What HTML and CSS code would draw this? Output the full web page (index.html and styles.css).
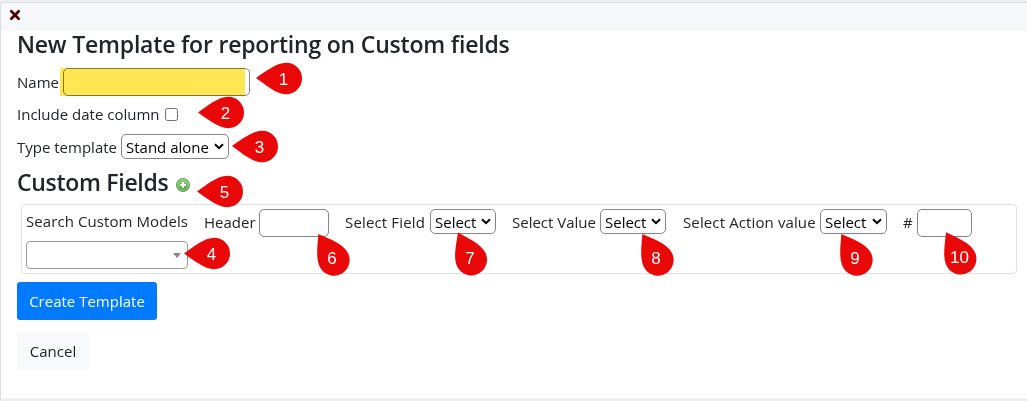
FILE: index.html
```html
<!DOCTYPE html>
<html lang="en">
  <head>
    <meta charset="UTF-8">
    <meta name="viewport" content="width=device-width, initial-scale=1.0">
    <title>New Template</title>
    <link rel="stylesheet" href="styles.css">
  </head>
  <body>
    <main class="card">
      <header class="card-header">
        <svg class="close" viewBox="0 0 12 12"><path d="M2.3 2.3L9.7 9.7M9.7 2.3L2.3 9.7"/></svg>
      </header>
      <section class="card-body">
        <h1 class="title">New Template for reporting on Custom fields</h1>
        <div class="row row-name">
          <label class="label-name">Name</label>
          <div class="name-wrap">
            <input class="input input-name" type="text">
            <span class="highlight"></span>
          </div>
        </div>
        <div class="row row-date">
          <label class="label-date">Include date column</label>
          <span class="check"></span>
        </div>
        <div class="row row-type">
          <label class="label-type">Type template</label>
          <div class="select select-type"><span>Stand alone</span><svg viewBox="0 0 10 7"><path d="M1 1.2L5 5.2L9 1.2"/></svg></div>
        </div>
        <div class="row row-fields">
          <h2 class="title title-fields">Custom Fields</h2>
          <svg class="add" viewBox="0 0 14 14">
            <defs>
              <linearGradient id="green" x1="0" y1="0" x2="0" y2="1">
                <stop offset="0" stop-color="#8fce7c"/>
                <stop offset="1" stop-color="#43a02c"/>
              </linearGradient>
            </defs>
            <circle cx="7" cy="7" r="6.4" fill="url(#green)" stroke="#4a963a"/>
            <circle cx="7" cy="7" r="5.3" fill="none" stroke="#b5dfa8" stroke-width=".8"/>
            <path d="M7 4v6M4 7h6" stroke="#fff" stroke-width="2.2"/>
          </svg>
        </div>

        <div class="fields">
          <div class="models">
            <label class="label-models">Search Custom Models</label>
            <div class="combo"><span class="arrow"></span></div>
          </div>
          <div class="field field-header">
            <label>Header</label>
            <input class="input" type="text">
          </div>
          <div class="field field-select">
            <label>Select Field</label>
            <div class="select"><span>Select</span><svg viewBox="0 0 10 7"><path d="M1 1.2L5 5.2L9 1.2"/></svg></div>
          </div>
          <div class="field field-value">
            <label>Select Value</label>
            <div class="select"><span>Select</span><svg viewBox="0 0 10 7"><path d="M1 1.2L5 5.2L9 1.2"/></svg></div>
          </div>
          <div class="field field-action">
            <label>Select Action value</label>
            <div class="select"><span>Select</span><svg viewBox="0 0 10 7"><path d="M1 1.2L5 5.2L9 1.2"/></svg></div>
          </div>
          <div class="field field-number">
            <label>#</label>
            <input class="input" type="text">
          </div>
        </div>

        <button class="btn btn-primary">Create Template</button>
        <button class="btn btn-light">Cancel</button>
      </section>
    </main>

    <!-- numbered markers over the form -->
    <svg class="markers" viewBox="0 0 1027 401">
      <defs>
        <path id="drop" d="M0 0C9 -6 20 -15.7 30.3 -15.7A15.7 15.7 0 0 1 30.3 15.7C20 15.7 9 6 0 0Z"/>
      </defs>
      <use href="#drop" transform="translate(256 78) rotate(1)"/>
      <use href="#drop" transform="translate(198 112.5)"/>
      <use href="#drop" transform="translate(232 146) rotate(1)"/>
      <use href="#drop" transform="translate(184 253.5)"/>
      <use href="#drop" transform="translate(197 191.5)"/>
      <use href="#drop" transform="translate(318.3 234) rotate(59)"/>
      <use href="#drop" transform="translate(458 232.5) rotate(64)"/>
      <use href="#drop" transform="translate(642.3 234) rotate(59)"/>
      <use href="#drop" transform="translate(841.3 234) rotate(59)"/>
      <use href="#drop" transform="translate(946 232.3) rotate(61)"/>
      <text x="283.5" y="85">1</text>
      <text x="225.5" y="119">2</text>
      <text x="259.5" y="153">3</text>
      <text x="211.5" y="260">4</text>
      <text x="224.5" y="198">5</text>
      <text x="332" y="264">6</text>
      <text x="470" y="264">7</text>
      <text x="656" y="263.5">8</text>
      <text x="855" y="263.5">9</text>
      <text x="959.5" y="262.5">10</text>
    </svg>
  </body>
</html>
```

FILE: styles.css
```css
* {
    box-sizing: border-box;
    margin: 0;
    padding: 0;
}
body {
    width: 1027px;
    height: 401px;
    padding-top: 2px;
    overflow: hidden;
    background: #f0f0f0;
    font-family: "Open Sans", "Noto Sans", sans-serif;
    font-size: 15px;
    line-height: 24px;
    color: #212529;
}
.card {
    height: 399px;
    border-top: 1px solid #dcdee1;
    border-left: 1px solid #dcdfe5;
    border-top-left-radius: 4px;
    overflow: hidden;
}
.card-header {
    height: 28px;
    padding: 6px 0 0 8px;
    background: #f7f8fa;
}
.close {
    display: block;
    width: 12px;
    height: 12px;
    stroke: #4d0000;
    stroke-width: 2.7;
    stroke-linecap: round;
}
.card-body {
    height: 367px;
    padding-left: 16px;
    background: #fff;
}
.title {
    width: max-content;
    height: 29px;
    font-size: 23px;
    font-weight: 600;
    line-height: 27px;
    letter-spacing: -0.2px;
    white-space: nowrap;
}
.row {
    display: flex;
    align-items: center;
}
label {
    white-space: nowrap;
}
.row-name {
    height: 28px;
    margin-top: 8px;
}
.label-name {
    width: 46px;
}
.name-wrap {
    position: relative;
    width: 187px;
    height: 28px;
}
.input {
    display: block;
    height: 28px;
    border: 1px solid #858585;
    border-radius: 5px;
    background: #fff;
}
.input-name {
    width: 187px;
}
.highlight {
    position: absolute;
    top: 0;
    left: -3px;
    width: 185px;
    height: 28px;
    background: #ffe754;
    mix-blend-mode: multiply;
}
.row-date {
    height: 24px;
    margin-top: 6px;
}
.label-date {
    width: 148px;
}
.check {
    width: 13px;
    height: 13px;
    border: 1px solid #6f6f6f;
    border-radius: 2.5px;
}
.row-type {
    height: 25px;
    margin-top: 8px;
}
.label-type {
    width: 104px;
}
.select {
    display: flex;
    align-items: center;
    justify-content: space-between;
    width: 66px;
    height: 25px;
    padding: 0 4px;
    border: 1px solid #858585;
    border-radius: 5px;
    background: #fff;
    color: #000;
    white-space: nowrap;
}
.select svg {
    flex: none;
    width: 10px;
    height: 7px;
    fill: none;
    stroke: #000;
    stroke-width: 2;
}
.select-type {
    width: 108px;
}
.row-fields {
    height: 29px;
    margin-top: 9px;
}
.title-fields {
    width: 159px;
    line-height: 28px;
    letter-spacing: -0.3px;
}
.add {
    width: 14px;
    height: 14px;
    margin-top: 5px;
}
.fields {
    display: flex;
    width: 996px;
    height: 70px;
    margin: 7px 0 8px 4px;
    padding: 4px 0 0 4px;
    border: 1px solid #dee2e6;
    border-radius: 4px;
}
.models {
    width: 178px;
}
.label-models {
    display: block;
    letter-spacing: 0.08px;
}
.combo {
    display: flex;
    align-items: center;
    justify-content: flex-end;
    width: 162px;
    height: 28px;
    margin-top: 8px;
    padding-right: 6px;
    border: 1px solid #999;
    border-radius: 4px;
}
.arrow {
    border: 4px solid transparent;
    border-top: 5px solid #888;
    border-bottom: 0;
}
.field {
    display: flex;
    justify-content: space-between;
    height: 28px;
}
.field label {
    line-height: 27px;
}
.field-header {
    width: 125px;
}
.field-header .input {
    width: 70px;
}
.field-select {
    width: 151px;
    margin-left: 16px;
}
.field-select label {
    letter-spacing: 0.15px;
}
.field-value {
    width: 154px;
    margin-left: 16px;
}
.field-action {
    width: 204px;
    margin-left: 17px;
}
.field-action label {
    letter-spacing: 0.12px;
}
.field-action .select {
    width: 67px;
}
.field-number {
    width: 69px;
    margin-left: 16px;
}
.field-number .input {
    width: 55px;
}
.btn {
    display: block;
    height: 38px;
    border: none;
    border-radius: 3px;
    font-family: inherit;
    font-size: 15px;
    white-space: nowrap;
}
.btn-primary {
    width: 140px;
    background: #007bff;
    color: #fff;
}
.btn-light {
    width: 72px;
    margin-top: 12px;
    background: #f8f9fa;
    color: #212529;
}
.markers {
    position: absolute;
    top: 0;
    left: 0;
    width: 1027px;
    height: 401px;
    fill: #e90808;
    pointer-events: none;
}
.markers text {
    fill: #fff;
    font-family: "Liberation Sans", Arial, sans-serif;
    font-size: 17px;
    text-anchor: middle;
}
```
